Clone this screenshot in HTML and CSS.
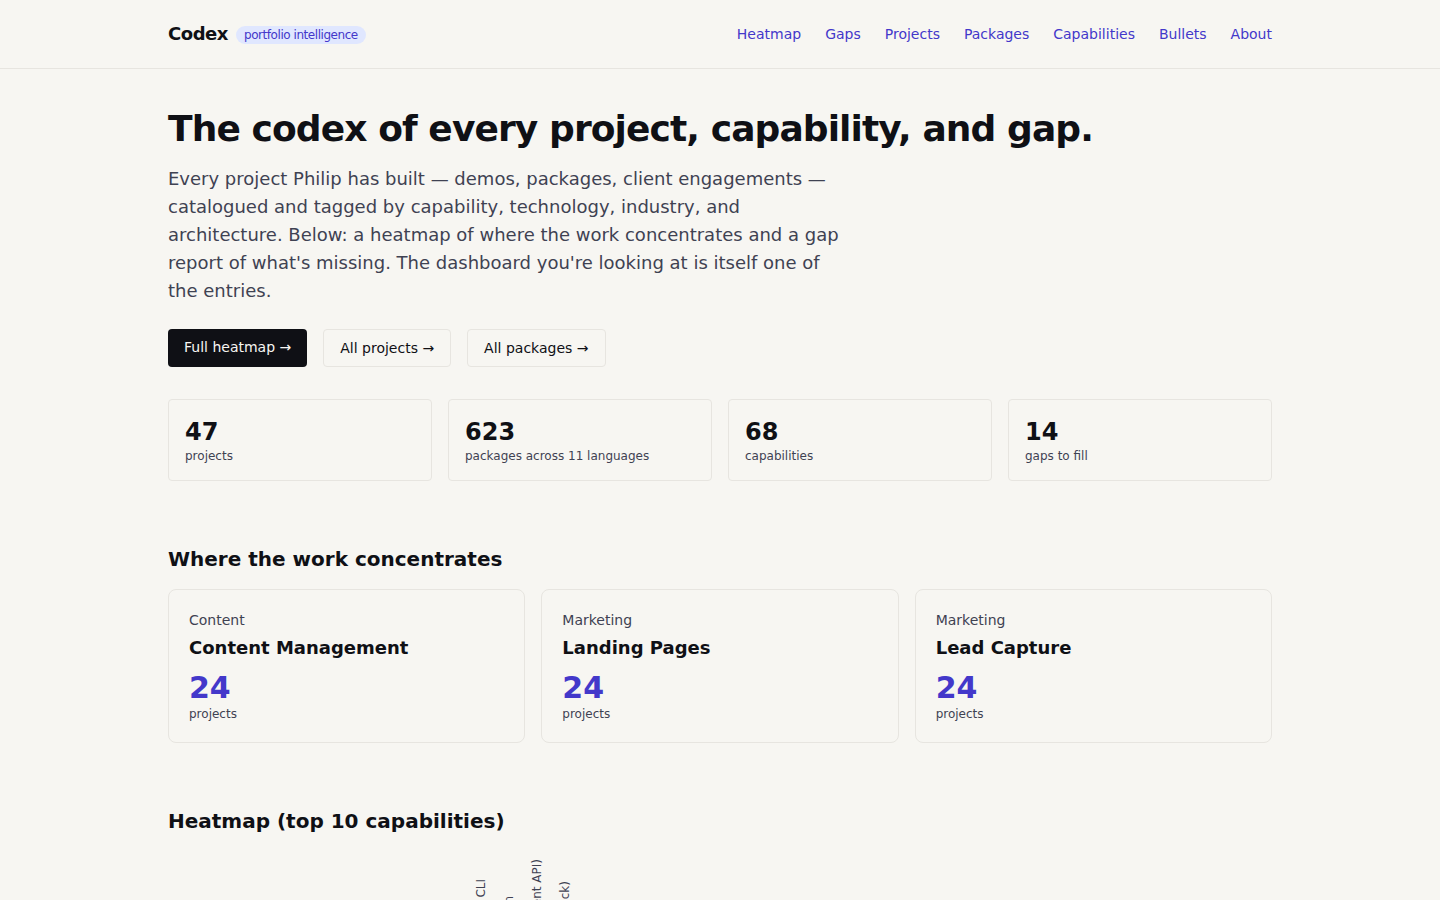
FILE: index.html
```html
<!DOCTYPE html>
<html lang="en">
<head>
    <meta charset="UTF-8">
    <meta name="viewport" content="width=device-width, initial-scale=1.0">
    <title>Codex</title>
    <link rel="stylesheet" href="styles.css">
</head>
<body>
    <header class="site-header">
        <div class="container header-row">
            <a class="logo" href="#">Codex<span class="badge">portfolio intelligence</span></a>
            <nav class="site-nav">
                <a href="#heatmap">Heatmap</a>
                <a href="#gaps">Gaps</a>
                <a href="#projects">Projects</a>
                <a href="#packages">Packages</a>
                <a href="#capabilities">Capabilities</a>
                <a href="#bullets">Bullets</a>
                <a href="#about">About</a>
            </nav>
        </div>
    </header>

    <main class="container">
        <!-- intro -->
        <section>
            <h1>The codex of every project, capability, and gap.</h1>
            <p class="lead">Every project Philip has built — demos, packages, client engagements — catalogued and tagged by capability, technology, industry, and architecture. Below: a heatmap of where the work concentrates and a gap report of what's missing. The dashboard you're looking at is itself one of the entries.</p>
            <div class="actions">
                <a class="btn btn-primary" href="#heatmap">Full heatmap →</a>
                <a class="btn" href="#projects">All projects →</a>
                <a class="btn" href="#packages">All packages →</a>
            </div>
            <div class="stats">
                <div class="stat">
                    <div class="stat-value">47</div>
                    <div class="small">projects</div>
                </div>
                <div class="stat">
                    <div class="stat-value">623</div>
                    <div class="small">packages across 11 languages</div>
                </div>
                <div class="stat">
                    <div class="stat-value">68</div>
                    <div class="small">capabilities</div>
                </div>
                <div class="stat">
                    <div class="stat-value">14</div>
                    <div class="small">gaps to fill</div>
                </div>
            </div>
        </section>

        <!-- top capabilities -->
        <section class="section">
            <h2>Where the work concentrates</h2>
            <div class="cards">
                <a class="card" href="#content-management">
                    <div class="card-group">Content</div>
                    <h3>Content Management</h3>
                    <div class="card-value">24</div>
                    <div class="small">projects</div>
                </a>
                <a class="card" href="#landing-pages">
                    <div class="card-group">Marketing</div>
                    <h3>Landing Pages</h3>
                    <div class="card-value">24</div>
                    <div class="small">projects</div>
                </a>
                <a class="card" href="#lead-capture">
                    <div class="card-group">Marketing</div>
                    <h3>Lead Capture</h3>
                    <div class="card-value">24</div>
                    <div class="small">projects</div>
                </a>
            </div>
        </section>

        <!-- heatmap -->
        <section class="section" id="heatmap">
            <h2>Heatmap (top 10 capabilities)</h2>
            <div class="heatmap-scroll">
                <table class="heatmap">
                    <thead>
                        <tr>
                            <td class="corner"></td>
                            <th scope="col"><span>Package build CLI</span></th>
                            <th scope="col"><span>Authentication</span></th>
                            <th scope="col"><span>Claude (Content API)</span></th>
                            <th scope="col"><span>Messages (Slack)</span></th>
                        </tr>
                    </thead>
                    <tbody>
                        <tr>
                            <th scope="row">Content Management</th>
                            <td>4</td><td>6</td><td>8</td><td>2</td>
                        </tr>
                        <tr>
                            <th scope="row">Landing Pages</th>
                            <td>3</td><td>5</td><td>7</td><td>2</td>
                        </tr>
                        <tr>
                            <th scope="row">Lead Capture</th>
                            <td>2</td><td>6</td><td>5</td><td>4</td>
                        </tr>
                    </tbody>
                </table>
            </div>
        </section>
    </main>
</body>
</html>
```
FILE: styles.css
```css
:root {
    --paper: #f7f6f2;
    --ink: #0f1015;
    --muted: #3f4252;
    --line: #e7e5e0;
    --accent: #4338ca;
    --accent-soft: #e0e7ff;
}

* {
    box-sizing: border-box;
}

body {
    margin: 0;
    background: var(--paper);
    color: var(--ink);
    font-family: "DejaVu Sans", sans-serif;
    font-size: 16px;
    line-height: 24px;
}

a {
    color: var(--accent);
    text-decoration: none;
}

h1, h2, h3, p {
    margin: 0;
}

.container {
    max-width: 1152px;
    margin: 0 auto;
    padding: 0 24px;
}

/* header */
.site-header {
    border-bottom: 1px solid var(--line);
}

.header-row {
    display: flex;
    align-items: center;
    justify-content: space-between;
    padding: 20px 24px;
}

.logo {
    color: var(--ink);
    font-size: 18px;
    line-height: 28px;
    font-weight: 700;
    letter-spacing: -0.025em;
}

.badge {
    margin-left: 8px;
    padding: 2px 8px;
    border-radius: 99px;
    background: var(--accent-soft);
    color: var(--accent);
    font-size: 12px;
    line-height: 16px;
    font-weight: 400;
    vertical-align: middle;
}

.site-nav {
    display: flex;
    gap: 24px;
    font-size: 14px;
    line-height: 20px;
}

/* intro */
main.container {
    padding-top: 40px;
    padding-bottom: 40px;
}

h1 {
    font-size: 36px;
    line-height: 40px;
    letter-spacing: -0.025em;
}

.lead {
    max-width: 672px;
    margin-top: 16px;
    color: var(--muted);
    font-size: 18px;
    line-height: 28px;
}

.actions {
    display: flex;
    flex-wrap: wrap;
    gap: 16px;
    margin-top: 24px;
}

.btn {
    padding: 8px 16px;
    border: 1px solid var(--line);
    border-radius: 4px;
    color: var(--ink);
    font-size: 14px;
    line-height: 20px;
}

.btn-primary {
    border: none;
    background: var(--ink);
    color: var(--paper);
}

.stats {
    display: grid;
    grid-template-columns: repeat(4, 1fr);
    gap: 16px;
    margin-top: 32px;
}

.stat {
    padding: 16px;
    border: 1px solid var(--line);
    border-radius: 4px;
}

.stat-value {
    font-size: 24px;
    line-height: 32px;
    font-weight: 700;
}

.small {
    color: var(--muted);
    font-size: 12px;
    line-height: 16px;
}

/* sections */
.section {
    margin-top: 64px;
}

h2 {
    margin-bottom: 16px;
    font-size: 20px;
    line-height: 28px;
}

.cards {
    display: grid;
    grid-template-columns: repeat(3, 1fr);
    gap: 16px;
}

.card {
    padding: 20px;
    border: 1px solid var(--line);
    border-radius: 8px;
    color: var(--ink);
}

.card-group {
    color: var(--muted);
    font-size: 14px;
    line-height: 20px;
}

.card h3 {
    margin-top: 4px;
    font-size: 18px;
    line-height: 28px;
}

.card-value {
    margin-top: 8px;
    color: var(--accent);
    font-size: 30px;
    line-height: 36px;
    font-weight: 700;
}

/* heatmap */
.heatmap-scroll {
    overflow-x: auto;
}

.heatmap {
    border-collapse: collapse;
    table-layout: fixed;
    width: 411px;
    color: var(--muted);
    font-size: 12px;
    line-height: 16px;
}

.heatmap .corner {
    width: 299px;
}

.heatmap th {
    font-weight: 400;
    text-align: left;
}

.heatmap thead th {
    padding: 8px 6px;
    vertical-align: bottom;
}

/* labels read from bottom to top */
.heatmap thead span {
    display: block;
    writing-mode: vertical-rl;
    transform: rotate(180deg);
    white-space: nowrap;
}

.heatmap tbody td {
    height: 28px;
    padding: 0;
    border: 1px solid var(--line);
    text-align: center;
}
```
